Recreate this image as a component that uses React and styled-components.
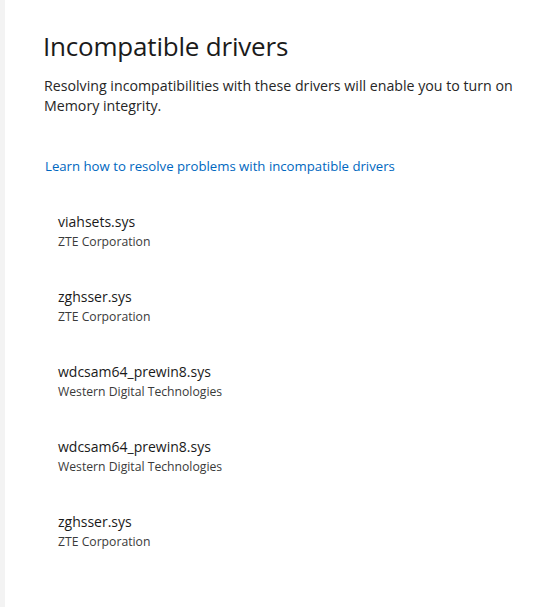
import React from "react";
import styled, { createGlobalStyle } from "styled-components";

const Global = createGlobalStyle`
  html, body { margin: 0; padding: 0; background: #ffffff; }
  body { font-family: "Segoe UI", "Open Sans", "Noto Sans", sans-serif; }
`;

const Page = styled.div`
  display: flex;
  width: 535px;
  height: 607px;
  overflow: hidden;
  background: #ffffff;
`;

const SideStrip = styled.div`
  width: 5px;
  flex: none;
  background: #f3f3f3;
`;

const Content = styled.main`
  flex: 1;
  padding: 26px 0 0 38px;
  display: flex;
  flex-direction: column;
`;

const Title = styled.h1`
  margin: 0;
  font-size: 26px;
  font-weight: 400;
  line-height: 40px;
  color: #1b1b1b;
  letter-spacing: -0.2px;
`;

const Description = styled.p`
  margin: 10px 0 0 1px;
  font-size: 14.2px;
  line-height: 20px;
  color: #262626;
  max-width: 485px;
`;

const Link = styled.a`
  margin: 40px 0 0 2px;
  font-size: 13.2px;
  line-height: 20px;
  color: #0067c0;
  text-decoration: none;
  cursor: pointer;
`;

const DriverList = styled.ul`
  list-style: none;
  margin: 36px 0 0 15px;
  padding: 0;
  display: flex;
  flex-direction: column;
  gap: 35px;
`;

const Driver = styled.li`
  display: flex;
  flex-direction: column;
`;

const DriverName = styled.span`
  font-size: 14px;
  line-height: 20px;
  color: #1a1a1a;
`;

const Vendor = styled.span`
  font-size: 12.2px;
  line-height: 20px;
  color: #3a3a3a;
`;

const drivers = [
  { name: "viahsets.sys", vendor: "ZTE Corporation" },
  { name: "zghsser.sys", vendor: "ZTE Corporation" },
  { name: "wdcsam64_prewin8.sys", vendor: "Western Digital Technologies" },
  { name: "wdcsam64_prewin8.sys", vendor: "Western Digital Technologies" },
  { name: "zghsser.sys", vendor: "ZTE Corporation" },
];

export default function App() {
  return (
    <>
      <Global />
      <Page>
        <SideStrip />
        <Content>
          <Title>Incompatible drivers</Title>
          <Description>
            Resolving incompatibilities with these drivers will enable you to turn on Memory integrity.
          </Description>
          <Link>Learn how to resolve problems with incompatible drivers</Link>
          <DriverList>
            {drivers.map((d, i) => (
              <Driver key={i}>
                <DriverName>{d.name}</DriverName>
                <Vendor>{d.vendor}</Vendor>
              </Driver>
            ))}
          </DriverList>
        </Content>
      </Page>
    </>
  );
}
